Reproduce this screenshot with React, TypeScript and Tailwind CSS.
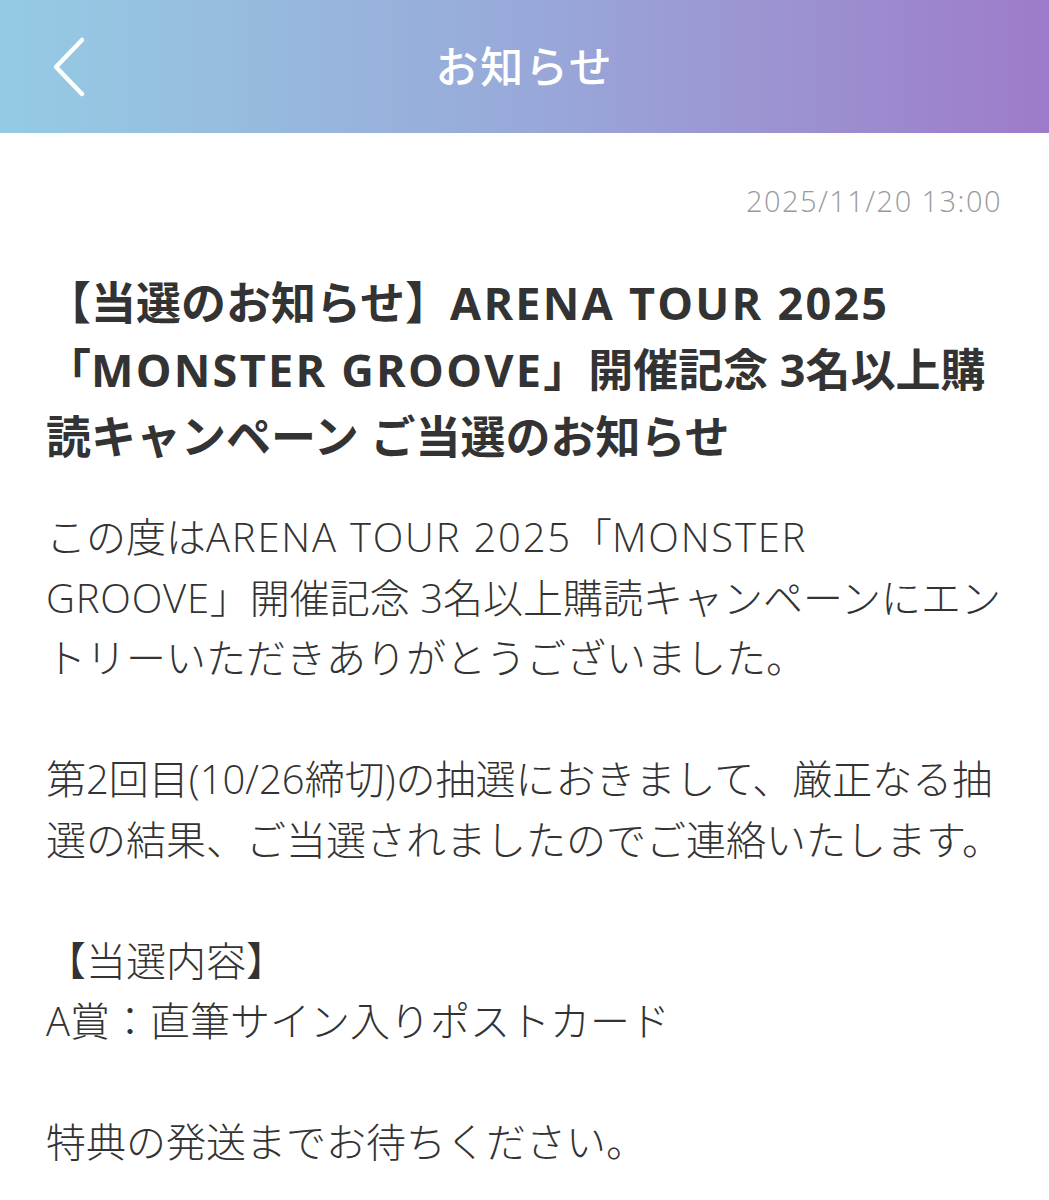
import type { ReactNode } from 'react';

const jp = { fontFamily: '"Open Sans", "Noto Sans CJK JP", "Noto Sans", sans-serif' };

// Latin runs get a little tracking so they sit as wide as in the app
function T({ children }: { children: ReactNode }) {
  return <span className="tracking-[0.05em]">{children}</span>;
}

function B({ children }: { children: ReactNode }) {
  return <span className="tracking-[0.045em]">{children}</span>;
}

export default function App() {
  return (
    <div className="w-[1049px] min-h-[1200px] bg-white" style={jp}>
      {/* Header */}
      <div className="relative h-[133px] flex items-center justify-center bg-gradient-to-r from-[#94cbe4] via-[#98a9d9] to-[#9d7bc9]">
        <button className="absolute left-[48px] top-[36px] w-[40px] h-[62px] flex items-center justify-center">
          <svg width="36" height="62" viewBox="0 0 36 62" fill="none">
            <path d="M32 4 L6 31 L32 58" stroke="white" strokeWidth="4.5" strokeLinecap="round" strokeLinejoin="round" />
          </svg>
        </button>
        <h1 className="text-[43px] leading-none text-white tracking-[0.04em] font-medium">お知らせ</h1>
      </div>

      <div className="px-[46px]">
        {/* Date */}
        <p className="mt-[50px] text-right text-[29px] leading-[36px] text-[#9a9a9a] font-light tracking-[0.05em] pr-[1px]">
          2025/11/20 13:00
        </p>

        {/* Title */}
        <h2 className="mt-[50px] text-[45px] leading-[67px] font-bold text-[#333] whitespace-nowrap">
          【当選のお知らせ】<T>ARENA TOUR 2025</T>
          <br />
          「<T>MONSTER GROOVE</T>」開催記念 3名以上購
          <br />
          読キャンペーン ご当選のお知らせ
        </h2>

        {/* Body */}
        <div className="mt-[37px] text-[40px] leading-[60.5px] text-[#333] font-light whitespace-nowrap">
          <p>
            この度は<B>ARENA TOUR 2025</B>「<B>MONSTER</B>
            <br />
            <span className="tracking-[0.02em]">GROOVE</span>」開催記念 3名以上購読キャンペーンにエン
            <br />
            トリーいただきありがとうございました。
          </p>
          <p className="mt-[60.5px]">
            第2回目(10/26締切)の抽選におきまして、厳正なる抽
            <br />
            選の結果、ご当選されましたのでご連絡いたします。
          </p>
          <p className="mt-[60.5px]">
            【当選内容】
            <br />
            A賞：直筆サイン入りポストカード
          </p>
          <p className="mt-[60.5px]">特典の発送までお待ちください。</p>
        </div>
      </div>
    </div>
  );
}
